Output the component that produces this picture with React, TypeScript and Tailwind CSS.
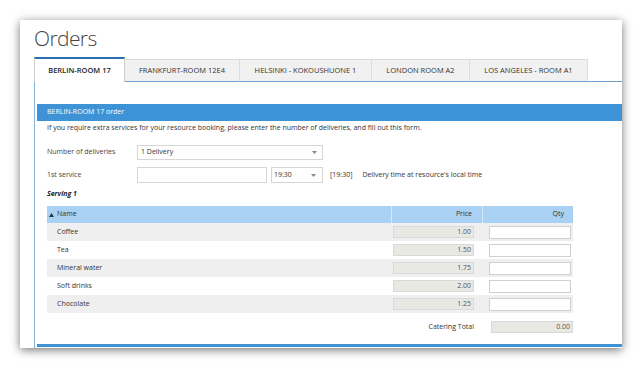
import React from "react"

const tabs = [
  { label: "BERLIN-ROOM 17", w: "w-[91px]", active: true },
  { label: "FRANKFURT-ROOM 12E4", w: "w-[115px]" },
  { label: "HELSINKI - KOKOUSHUONE 1", w: "w-[132px]" },
  { label: "LONDON ROOM A2", w: "w-[98px]" },
  { label: "LOS ANGELES - ROOM A1", w: "w-[118px]" },
]

const items = [
  { name: "Coffee", price: "1.00" },
  { name: "Tea", price: "1.50" },
  { name: "Mineral water", price: "1.75" },
  { name: "Soft drinks", price: "2.00" },
  { name: "Chocolate", price: "1.25" },
]

function Caret() {
  return (
    <svg width="5" height="3" viewBox="0 0 5 3" className="shrink-0">
      <path d="M0 0 L5 0 L2.5 3 Z" fill="#888" />
    </svg>
  )
}

export default function App() {
  return (
    <div
      className="w-[642px] h-[368px] bg-white pt-[20px] pl-[20px] overflow-hidden text-[#333]"
      style={{ fontFamily: '"Open Sans", "Noto Sans", sans-serif' }}
    >
      <div className="w-[602px] h-[328px] bg-white shadow-[0_2px_9px_rgba(0,0,0,0.55)] pl-[14px] flex flex-col">
        <h1 className="text-[21px] font-light leading-none text-[#444] pt-[8px] h-[37px] tracking-[-0.6px]">Orders</h1>

        {/* tabs */}
        <div className="flex items-end h-[25px]">
          {tabs.map((t) =>
            t.active ? (
              <div
                key={t.label}
                className={`${t.w} h-[25px] border-t-2 border-t-[#2a6fae] border-l border-r border-[#cfcfcf] bg-white flex items-center justify-center text-[7.5px] font-semibold text-[#222]`}
              >
                {t.label}
              </div>
            ) : (
              <div
                key={t.label}
                className={`${t.w} h-[23px] border-t border-r border-[#dcdcdc] border-b border-b-[#6c9fcc] bg-[#f1f1f1] flex items-center justify-center text-[7.5px] text-[#333]`}
              >
                {t.label}
              </div>
            )
          )}
          <div className="flex-1 border-b border-[#6c9fcc]" />
        </div>

        {/* content */}
        <div className="flex-1 border-l border-[#86b3d9] pl-[2px] pt-[22px] flex flex-col">
          <div className="h-[17px] bg-[#3d93d5] pl-[10px] flex items-center text-white text-[7px]">
            BERLIN-ROOM 17 order
          </div>
          <div className="pl-[10px] flex-1 flex flex-col">
            <p className="text-[7px] h-[13px] leading-[13px]">
              If you require extra services for your resource booking, please enter the number of deliveries, and fill out this form.
            </p>

            <div className="flex items-center mt-[11px] h-[15px]">
              <span className="w-[90px] text-[7px] text-[#444]">Number of deliveries</span>
              <div className="w-[186px] h-[15px] border border-[#d6d6d6] flex items-center justify-between pl-[3px] pr-[5px] text-[7px]">
                <span>1 Delivery</span>
                <Caret />
              </div>
            </div>

            <div className="flex items-center mt-[7px] h-[16px]">
              <span className="w-[90px] text-[7px] text-[#444]">1st service</span>
              <div className="w-[130px] h-[16px] border border-[#d6d6d6]" />
              <div className="ml-[4px] w-[52px] h-[16px] border border-[#d6d6d6] flex items-center justify-between pl-[2px] pr-[6px] text-[7px]">
                <span>19:30</span>
                <Caret />
              </div>
              <span className="ml-[7px] text-[7px]">[19:30]</span>
              <span className="ml-[10px] text-[7px]">Delivery time at resource's local time</span>
            </div>

            <div className="mt-[3px] h-[17px] flex items-center text-[7px] font-bold italic text-[#222]">Serving 1</div>

            {/* table */}
            <div className="w-[526px] mt-[3px]">
              <div className="flex h-[17px] bg-[#a8d1f3] text-[7px] text-[#333]">
                <div className="w-[344px] flex items-center gap-[3px] pl-[2px]">
                  <svg width="5" height="4" viewBox="0 0 5 4">
                    <path d="M0 4 L2.5 0 L5 4 Z" fill="#333" />
                  </svg>
                  <span>Name</span>
                </div>
                <div className="w-[91px] border-l border-[#d6e8f8] flex items-center justify-end pr-[10px]">Price</div>
                <div className="w-[91px] border-l border-[#d6e8f8] flex items-center justify-end pr-[9px]">Qty</div>
              </div>
              {items.map((it, i) => (
                <div key={it.name} className={`flex h-[18px] text-[7px] ${i % 2 === 0 ? "bg-[#efefef]" : "bg-white"}`}>
                  <div className="w-[344px] flex items-center pl-[10px]">{it.name}</div>
                  <div className="w-[91px] flex items-center pl-[2px]">
                    <div className="w-[81px] h-[12px] bg-[#e9e9e4] border border-[#d9d9d9] flex items-center justify-end pr-[2px] text-[#555]">
                      {it.price}
                    </div>
                  </div>
                  <div className="w-[91px] flex items-center pl-[7px]">
                    <div className="w-[82px] h-[13px] bg-white border border-[#cfcfcf]" />
                  </div>
                </div>
              ))}
              <div className="flex items-center h-[12px] mt-[8px] text-[7px]">
                <div className="w-[427px] text-right">Catering Total</div>
                <div className="ml-[17px] w-[82px] h-[12px] bg-[#e9e9e4] border border-[#d9d9d9] flex items-center justify-end pr-[2px] text-[#555]">
                  0.00
                </div>
              </div>
            </div>
          </div>
          <div className="h-[3px] bg-[#3d93d5] mb-[1px]" />
        </div>
      </div>
    </div>
  )
}
